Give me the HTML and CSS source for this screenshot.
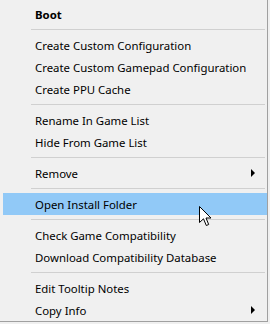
FILE: index.html
```html
<!DOCTYPE html>
<html>
<head>
<meta charset="utf-8">
<link rel="stylesheet" href="styles.css">
</head>
<body>
<div class="menu">
  <div class="item bold">Boot</div>
  <div class="sep"></div>
  <div class="item">Create Custom Configuration</div>
  <div class="item">Create Custom Gamepad Configuration</div>
  <div class="item">Create PPU Cache</div>
  <div class="sep"></div>
  <div class="item">Rename In Game List</div>
  <div class="item">Hide From Game List</div>
  <div class="sep"></div>
  <div class="item sub">Remove<span class="arrow"></span></div>
  <div class="sep"></div>
  <div class="item active">Open Install Folder
    <svg class="cursor" width="13" height="21" viewBox="0 0 13 21"><path d="M0.5 0.5 L0.5 16.5 L4.5 12.8 L7.3 19.5 L9.7 18.5 L7 12 L12 12 Z" fill="#fff" stroke="#000" stroke-width="1" stroke-linejoin="miter"/></svg>
  </div>
  <div class="sep"></div>
  <div class="item">Check Game Compatibility</div>
  <div class="item">Download Compatibility Database</div>
  <div class="sep"></div>
  <div class="item">Edit Tooltip Notes</div>
  <div class="item sub">Copy Info<span class="arrow"></span></div>
</div>
</body>
</html>
```
FILE: styles.css
```css
html, body {
  margin: 0;
  padding: 0;
  background: #f0f0f0;
}
.menu {
  width: 264px;
  height: 318px;
  padding: 3px 0 0 3px;
  border-right: 1px solid #a0a0a0;
  border-bottom: 1px solid #a0a0a0;
  background: #f0f0f0;
  font-family: "Noto Sans", "Open Sans", sans-serif;
  font-size: 11.4px;
  color: #000;
  display: flex;
  flex-direction: column;
}
.item {
  position: relative;
  height: 22px;
  line-height: 24px;
  padding-left: 32px;
  white-space: nowrap;
}
.bold { font-weight: bold; }
.active { background: #91c9f7; }
.sep {
  height: 9px;
  display: flex;
  align-items: flex-start;
  padding-top: 4px;
  box-sizing: border-box;
}
.sep::before {
  content: "";
  display: block;
  margin-left: 28px;
  width: 234px;
  height: 1px;
  background: #d0d0d0;
}
.arrow {
  position: absolute;
  right: 12px;
  top: 7px;
  width: 0;
  height: 0;
  border-top: 4px solid transparent;
  border-bottom: 4px solid transparent;
  border-left: 4px solid #000;
}
.cursor {
  position: absolute;
  left: 196px;
  top: 13px;
}
```
